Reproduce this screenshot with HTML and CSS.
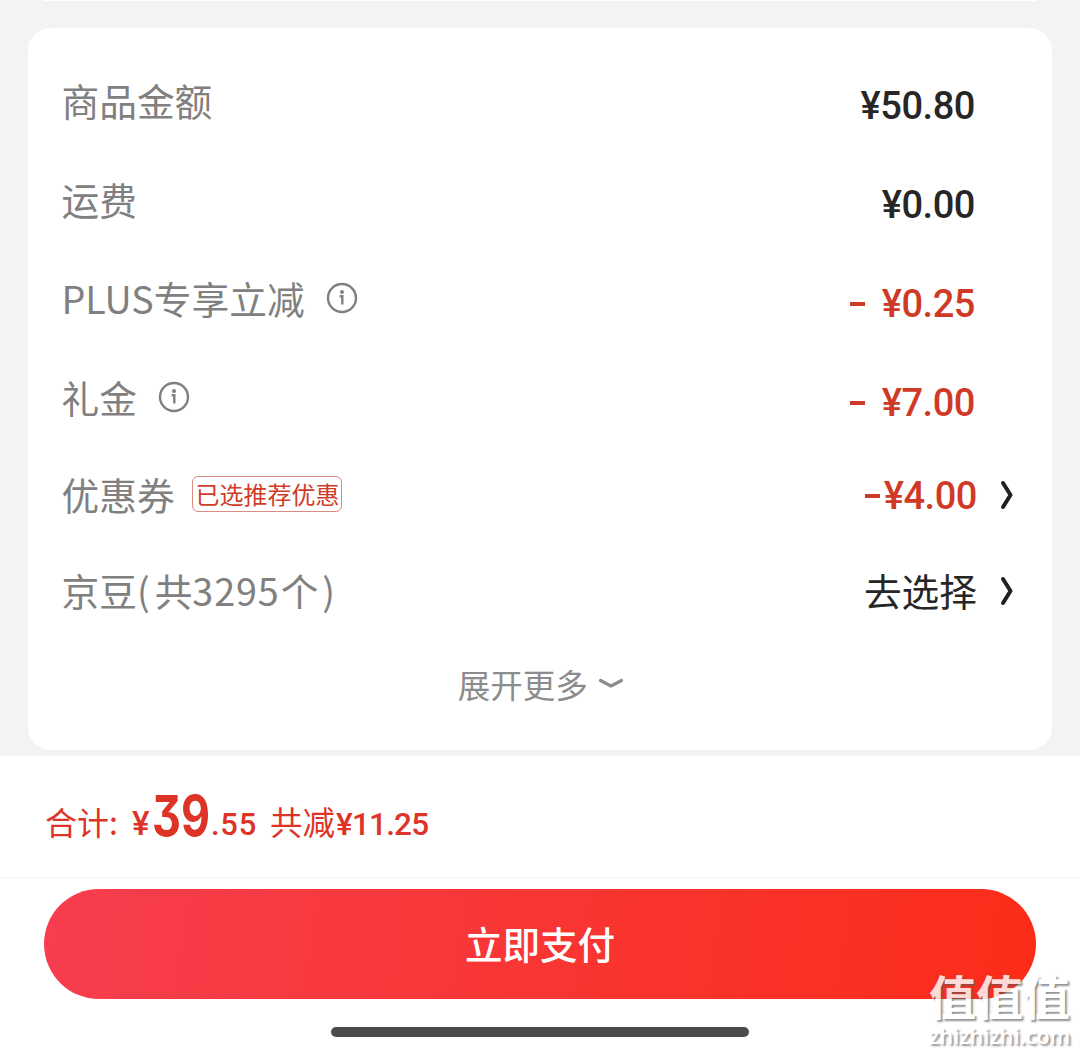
FILE: index.html
```html
<!DOCTYPE html>
<html lang="zh-CN">
<head>
<meta charset="utf-8">
<title>确认订单</title>
<link rel="stylesheet" href="styles.css">
</head>
<body>
<main class="page">
  <div class="previous-card"></div>
  <section class="card">
    <div class="row"><span class="label">商品金额</span><span class="value">¥50.80</span></div>
    <div class="row"><span class="label">运费</span><span class="value">¥0.00</span></div>
    <div class="row">
      <span class="label">PLUS专享立减</span>
      <svg class="info" viewBox="0 0 32 32"><circle cx="16" cy="16" r="14"/><path d="M13.7 14.3h2.6v8.2"/><circle class="dot" cx="16" cy="10" r="2"/></svg>
      <span class="value red"><span class="minus"></span>¥0.25</span>
    </div>
    <div class="row">
      <span class="label">礼金</span>
      <svg class="info" viewBox="0 0 32 32"><circle cx="16" cy="16" r="14"/><path d="M13.7 14.3h2.6v8.2"/><circle class="dot" cx="16" cy="10" r="2"/></svg>
      <span class="value red"><span class="minus"></span>¥7.00</span>
    </div>
    <div class="row linked">
      <span class="label">优惠券</span><span class="tag">已选推荐优惠</span>
      <span class="value red"><span class="minus tight"></span>¥4.00</span>
      <svg class="arrow" viewBox="0 0 14 30"><path d="M3 3 L10.5 15 L3 27"/></svg>
    </div>
    <div class="row linked">
      <span class="label">京豆<span class="open">(</span>共<span class="count">3295</span>个<span class="close">)</span></span>
      <span class="value choose">去选择</span>
      <svg class="arrow" viewBox="0 0 14 30"><path d="M3 3 L10.5 15 L3 27"/></svg>
    </div>
    <div class="more"><span>展开更多</span><svg class="down" viewBox="0 0 24 12"><path d="M1.5 3.5 L12 9 L22.5 3.5"/></svg></div>
  </section>
  <footer class="checkout">
    <div class="total">
      <span class="total-label">合计:</span>
      <span class="currency">¥</span><span class="whole">39</span><span class="cents">.55</span>
      <span class="saved">共减</span><span class="saved-amount">¥11.25</span>
    </div>
    <div class="pay-area">
      <button class="pay" type="button">立即支付</button>
      <div class="home-bar"></div>
    </div>
  </footer>
  <div class="watermark"><span class="mark-name">值值值</span><span class="mark-site">zhizhizhi.com</span></div>
</main>
</body>
</html>
```
FILE: styles.css
```css
* { box-sizing: border-box; }
body { margin: 0; background: #f3f3f3; font-family: "Noto Sans CJK SC", sans-serif; }
.page { position: relative; width: 1080px; height: 1054px; overflow: hidden; display: flex; flex-direction: column; }
.previous-card { flex: none; height: 1px; margin: 0 44px 27px; background: #fff; }
.card { flex: none; height: 722px; margin: 0 28px; padding: 22px 38px 0 33.5px; background: #fff; border-radius: 22px; }
.row { display: flex; align-items: center; height: 99px; }
.label { font-size: 37.7px; line-height: 56px; color: #808080; white-space: nowrap; }
.value { display: flex; align-items: center; margin-left: auto; margin-right: 39px; padding-top: 13px; font: 500 38px/50px Roboto, sans-serif; letter-spacing: -.45px; color: #262626; white-space: nowrap; }
.red { color: #cf3a27; }
.minus { width: 15px; height: 4px; margin-right: 17px; background: currentColor; }
.minus.tight { margin-right: 4px; }
.info { width: 32px; height: 32px; margin-left: 21px; fill: none; stroke: #808080; stroke-width: 2.4; }
.dot { fill: #808080; stroke: none; }
.linked { height: 96px; }
.linked .value { margin-right: 23px; padding-top: 3px; }
.linked .choose { padding-top: 0; font: 400 37.7px/56px "Noto Sans CJK SC", sans-serif; letter-spacing: 0; }
.open { margin-right: 5px; }
.count { margin-right: 1px; letter-spacing: .9px; }
.close { margin-left: 4px; }
.arrow { width: 14px; height: 30px; margin-top: 2px; fill: none; stroke: #202020; stroke-width: 4; stroke-linecap: round; stroke-linejoin: round; }
.tag { width: 150px; height: 36px; margin-left: 17px; padding: 0 3px; border: 1px solid #d98c80; border-radius: 6px; font-size: 24px; line-height: 33px; color: #d03c28; white-space: nowrap; }
.more { display: flex; align-items: center; justify-content: center; height: 90px; padding-left: 5px; gap: 11px; font-size: 32.5px; color: #8c8c8c; }
.down { width: 24px; height: 12px; fill: none; stroke: #8c8c8c; stroke-width: 3.2; stroke-linecap: round; stroke-linejoin: round; }
.checkout { flex: none; height: 298px; margin-top: 6px; background: #fff; }
.total { display: flex; align-items: baseline; height: 122px; padding: 29px 0 0 45px; border-bottom: 1px solid #f5f5f5; color: #dd3427; white-space: nowrap; }
.total-label { width: 87px; font-size: 32px; line-height: 60px; }
.currency { width: 20px; font: 500 33px/60px Roboto, sans-serif; }
.whole { width: 59px; font: 700 56px/60px Inter, sans-serif; font-feature-settings: "cv09"; transform: translateY(1px) scaleX(.8); transform-origin: left; }
.cents { width: 59px; font: 500 31px/60px Roboto, sans-serif; letter-spacing: .7px; }
.saved { font-size: 32.5px; line-height: 60px; }
.saved-amount { margin-left: 1px; font: 500 31.5px/60px Roboto, sans-serif; letter-spacing: -.8px; }
.pay-area { display: flex; flex-direction: column; align-items: center; padding-top: 11px; }
.pay { width: 992px; height: 110px; padding: 0 0 2px; border: 0; border-radius: 55px; background: linear-gradient(100deg, #f73e4f, #f9342e 60%, #fc2c18); color: #fff; font: 500 37.5px/56px "Noto Sans CJK SC", sans-serif; }
.home-bar { width: 418px; height: 10px; margin-top: 28px; border-radius: 5px; background: #4b4b4b; }
.watermark { position: absolute; left: 929px; top: 965px; width: 145px; display: flex; flex-direction: column; color: #fff; opacity: .82; white-space: nowrap; text-shadow: 2px 2px 2px rgba(90, 90, 90, .8); }
.mark-name { font-size: 47px; line-height: 59px; font-weight: 700; }
.mark-site { font: 600 21.5px/24px "Open Sans", sans-serif; letter-spacing: .1px; }
```
